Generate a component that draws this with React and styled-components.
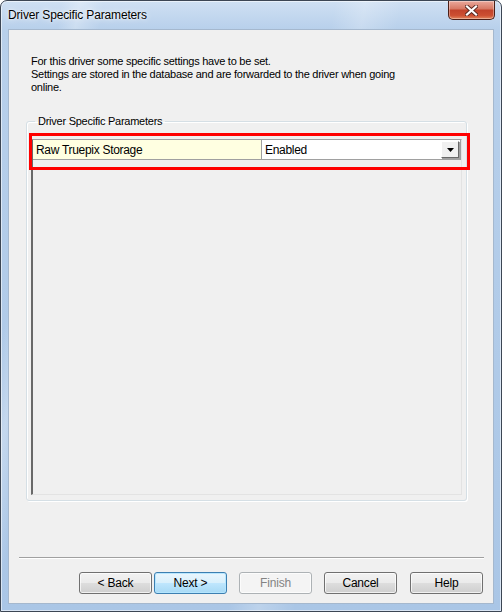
import React from 'react';
import styled, { createGlobalStyle } from 'styled-components';

const GlobalStyle = createGlobalStyle`
  html, body {
    margin: 0;
    padding: 0;
    background: #ffffff;
  }
  body {
    font-family: "Liberation Sans", Arial, sans-serif;
  }
  * {
    box-sizing: border-box;
  }
`;

const Window = styled.div`
  width: 502px;
  height: 612px;
  display: flex;
  flex-direction: column;
  border: 1px solid #3c4654;
  border-radius: 7px 7px 0 0;
  overflow: hidden;
  background:
    linear-gradient(100deg, transparent 0 10%, rgba(255,255,255,0.28) 13%, transparent 17%, transparent 55%, rgba(255,255,255,0.22) 60%, transparent 66%),
    linear-gradient(180deg, #cfe0f3 0px, #b8d0eb 28px, #aac6e6 100%);
  box-shadow: inset 0 0 0 1px rgba(255,255,255,0.55);
`;

const TitleBar = styled.div`
  height: 28px;
  display: flex;
  align-items: flex-start;
  flex-shrink: 0;
`;

const Title = styled.div`
  padding-left: 7px;
  line-height: 28px;
  font-size: 12px;
  letter-spacing: -0.15px;
  color: #000;
  text-shadow: 0 0 6px rgba(255,255,255,0.95), 0 0 2px rgba(255,255,255,0.9);
`;

const CloseButton = styled.div`
  margin-left: auto;
  margin-right: 6px;
  width: 47px;
  height: 19px;
  display: flex;
  align-items: center;
  justify-content: center;
  border: 1px solid #4b1f17;
  border-top: none;
  border-radius: 0 0 5px 5px;
  background: linear-gradient(180deg, #eaa99c 0%, #d77a66 42%, #c2432b 52%, #cc4f32 80%, #e2855c 100%);
  box-shadow: inset 0 0 0 1px rgba(255,255,255,0.35);
`;

const Client = styled.div`
  flex: 1;
  margin: 0 7px 7px 7px;
  border: 1px solid #a5b8ce;
  background: #f0f0f0;
  display: flex;
  flex-direction: column;
  font-size: 11px;
  letter-spacing: -0.25px;
  color: #000;
`;

const Description = styled.div`
  padding: 25px 0 0 22px;
  line-height: 13px;
`;

const GroupBox = styled.fieldset`
  margin: 21px 0 0 17px;
  width: 441px;
  padding: 11px 4px 5px 4px;
  border: 1px solid #d5dfe5;
  border-radius: 3px;
  box-shadow: inset 1px 1px 0 #ffffff, 1px 1px 0 #ffffff;
`;

const GroupLabel = styled.legend`
  margin-left: 4px;
  padding: 0 3px;
  line-height: 13px;
`;

const Grid = styled.div`
  position: relative;
  height: 356px;
  border-top: 1px solid #a0a0a0;
  border-left: 2px solid #696969;
  border-right: 1px solid #e3e3e3;
  border-bottom: 1px solid #e3e3e3;
  background: #f0f0f0;
`;

const Row = styled.div`
  display: flex;
  height: 20px;
  border-bottom: 1px solid #a0a0a0;
  font-size: 12px;
  letter-spacing: -0.3px;
`;

const Cell = styled.div`
  display: flex;
  align-items: center;
  width: ${p => p.width};
  flex: ${p => (p.grow ? 1 : 'none')};
  padding-left: 3px;
  background: ${p => p.bg};
  border-right: 1px solid #a0a0a0;
`;

const DropButton = styled.div`
  margin-left: auto;
  margin-right: 1px;
  width: 18px;
  height: 17px;
  display: flex;
  align-items: center;
  justify-content: center;
  background: #f0f0f0;
  border-top: 1px solid #ffffff;
  border-left: 1px solid #ffffff;
  border-right: 1px solid #696969;
  border-bottom: 1px solid #696969;
  box-shadow: 1px 1px 0 #a0a0a0;
`;

const Highlight = styled.div`
  position: absolute;
  left: -4px;
  top: -7px;
  width: 441px;
  height: 37px;
  border: 3px solid #ff0000;
  pointer-events: none;
`;

const Separator = styled.div`
  margin: 56px 0 0 10px;
  width: 465px;
  height: 1px;
  background: #a0a0a0;
  box-shadow: 0 1px 0 #ffffff;
`;

const ButtonRow = styled.div`
  display: flex;
  padding: 14px 0 0 70px;
`;

const Button = styled.div`
  width: 73px;
  height: 22px;
  margin-left: ${p => p.gap || 0}px;
  display: flex;
  align-items: center;
  justify-content: center;
  font-size: 12px;
  letter-spacing: -0.2px;
  border-radius: 3px;
  border: 1px solid ${p => (p.primary ? '#3c7fb1' : p.disabled ? '#adb2b5' : '#707070')};
  color: ${p => (p.disabled ? '#838383' : '#000')};
  background: ${p =>
    p.primary
      ? 'linear-gradient(180deg, #eaf6fd 0%, #d9f0fc 48%, #bee6fd 52%, #a7d9f5 100%)'
      : p.disabled
      ? '#f4f4f4'
      : 'linear-gradient(180deg, #f2f2f2 0%, #ebebeb 48%, #dddddd 52%, #cfcfcf 100%)'};
  box-shadow: inset 0 0 0 1px ${p => (p.primary ? 'rgba(180,230,255,0.9)' : 'rgba(255,255,255,0.7)')};
`;

const CloseIcon = () => (
  <svg width="13" height="11" viewBox="0 0 13 11">
    <path d="M2 1.5 L11 9.5 M11 1.5 L2 9.5" stroke="#5a2a22" strokeWidth="4" strokeLinecap="square" />
    <path d="M2 1.5 L11 9.5 M11 1.5 L2 9.5" stroke="#ffffff" strokeWidth="2.2" strokeLinecap="square" />
  </svg>
);

const DropArrow = () => (
  <svg width="7" height="4" viewBox="0 0 7 4">
    <path d="M0 0 H7 L3.5 4 Z" fill="#000" />
  </svg>
);

export default function App() {
  return (
    <>
      <GlobalStyle />
      <Window>
        <TitleBar>
          <Title>Driver Specific Parameters</Title>
          <CloseButton>
            <CloseIcon />
          </CloseButton>
        </TitleBar>
        <Client>
          <Description>
            For this driver some specific settings have to be set.
            <br />
            Settings are stored in the database and are forwarded to the driver when going
            <br />
            online.
          </Description>
          <GroupBox>
            <GroupLabel>Driver Specific Parameters</GroupLabel>
            <Grid>
              <Row>
                <Cell width="229px" bg="#ffffe1">Raw Truepix Storage</Cell>
                <Cell grow bg="#ffffff">
                  Enabled
                  <DropButton>
                    <DropArrow />
                  </DropButton>
                </Cell>
              </Row>
              <Highlight />
            </Grid>
          </GroupBox>
          <Separator />
          <ButtonRow>
            <Button>&lt; Back</Button>
            <Button primary gap={2}>Next &gt;</Button>
            <Button disabled gap={12}>Finish</Button>
            <Button gap={12}>Cancel</Button>
            <Button gap={13}>Help</Button>
          </ButtonRow>
        </Client>
      </Window>
    </>
  );
}
